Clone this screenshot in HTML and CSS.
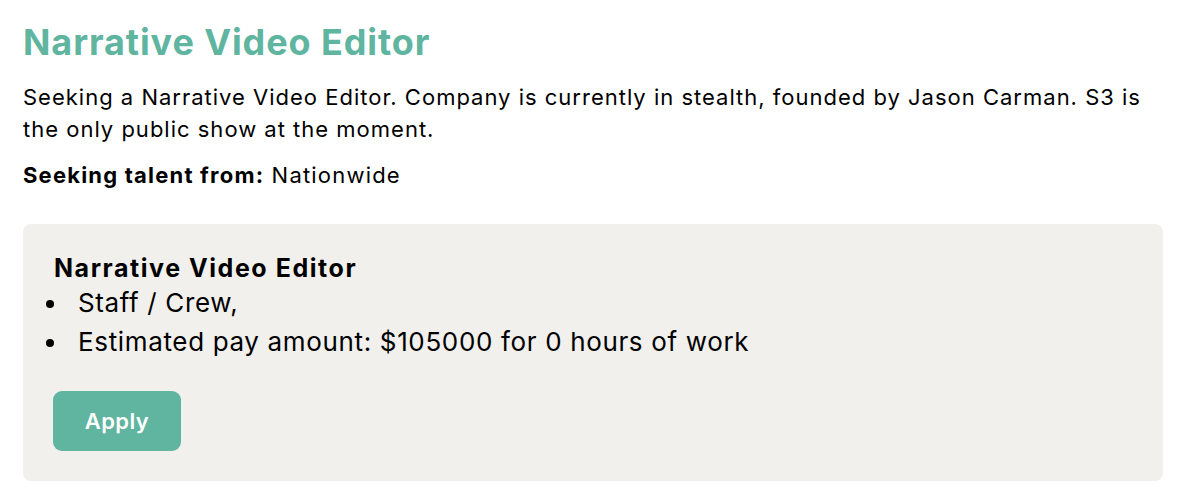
FILE: index.html
```html
<!DOCTYPE html>
<html>
<head>
<meta charset="utf-8">
<link rel="stylesheet" href="styles.css">
</head>
<body>
<main class="page">
  <h1 class="title">Narrative Video Editor</h1>
  <p class="desc">Seeking a Narrative Video Editor. Company is currently in stealth, founded by Jason Carman. S3 is the only public show at the moment.</p>
  <p class="from"><strong>Seeking talent from:</strong> Nationwide</p>
  <section class="card">
    <h2 class="role">Narrative Video Editor</h2>
    <ul class="details">
      <li>Staff / Crew,</li>
      <li>Estimated pay amount: $105000 for 0 hours of work</li>
    </ul>
    <button class="apply">Apply</button>
  </section>
</main>
</body>
</html>
```
FILE: styles.css
```css
html, body {
  margin: 0;
  padding: 0;
  background: #ffffff;
}
body {
  font-family: Inter, "Noto Sans", sans-serif;
  color: #000000;
}
.page {
  width: 1140px;
  margin-left: 23px;
  padding-top: 20px;
}
.title {
  margin: 0;
  font-size: 36px;
  line-height: 44px;
  font-weight: 700;
  letter-spacing: 0.9px;
  color: #5fb5a0;
}
.desc {
  margin: 17px 0 0;
  font-size: 22px;
  line-height: 32px;
  letter-spacing: 1px;
}
.from {
  margin: 14px 0 0;
  font-size: 22px;
  line-height: 32px;
  letter-spacing: 1.2px;
}
.from strong {
  font-weight: 700;
}
.card {
  margin-top: 33px;
  background: #f1f0ec;
  border-radius: 8px;
  padding: 29px 30px 30px;
  height: 257px;
  box-sizing: border-box;
}
.role {
  margin: 0 0 0 1px;
  font-size: 25px;
  line-height: 30px;
  font-weight: 700;
  letter-spacing: 1.55px;
}
.details {
  list-style: none;
  margin: 0 0 0 -7px;
  padding: 0;
  font-size: 26px;
  line-height: 39px;
  letter-spacing: 0.65px;
}
.details li {
  display: flex;
  align-items: center;
}
.details li::before {
  content: "";
  flex: none;
  width: 8px;
  height: 8px;
  margin: 3px 24px 0 0;
  border-radius: 50%;
  background: #000000;
}
.apply {
  display: block;
  margin-top: 30px;
  width: 128px;
  height: 60px;
  border: none;
  border-radius: 9px;
  background: #5fb5a0;
  color: #ffffff;
  font-family: Inter, "Noto Sans", sans-serif;
  font-size: 22px;
  font-weight: 600;
  letter-spacing: 0.4px;
}
```
